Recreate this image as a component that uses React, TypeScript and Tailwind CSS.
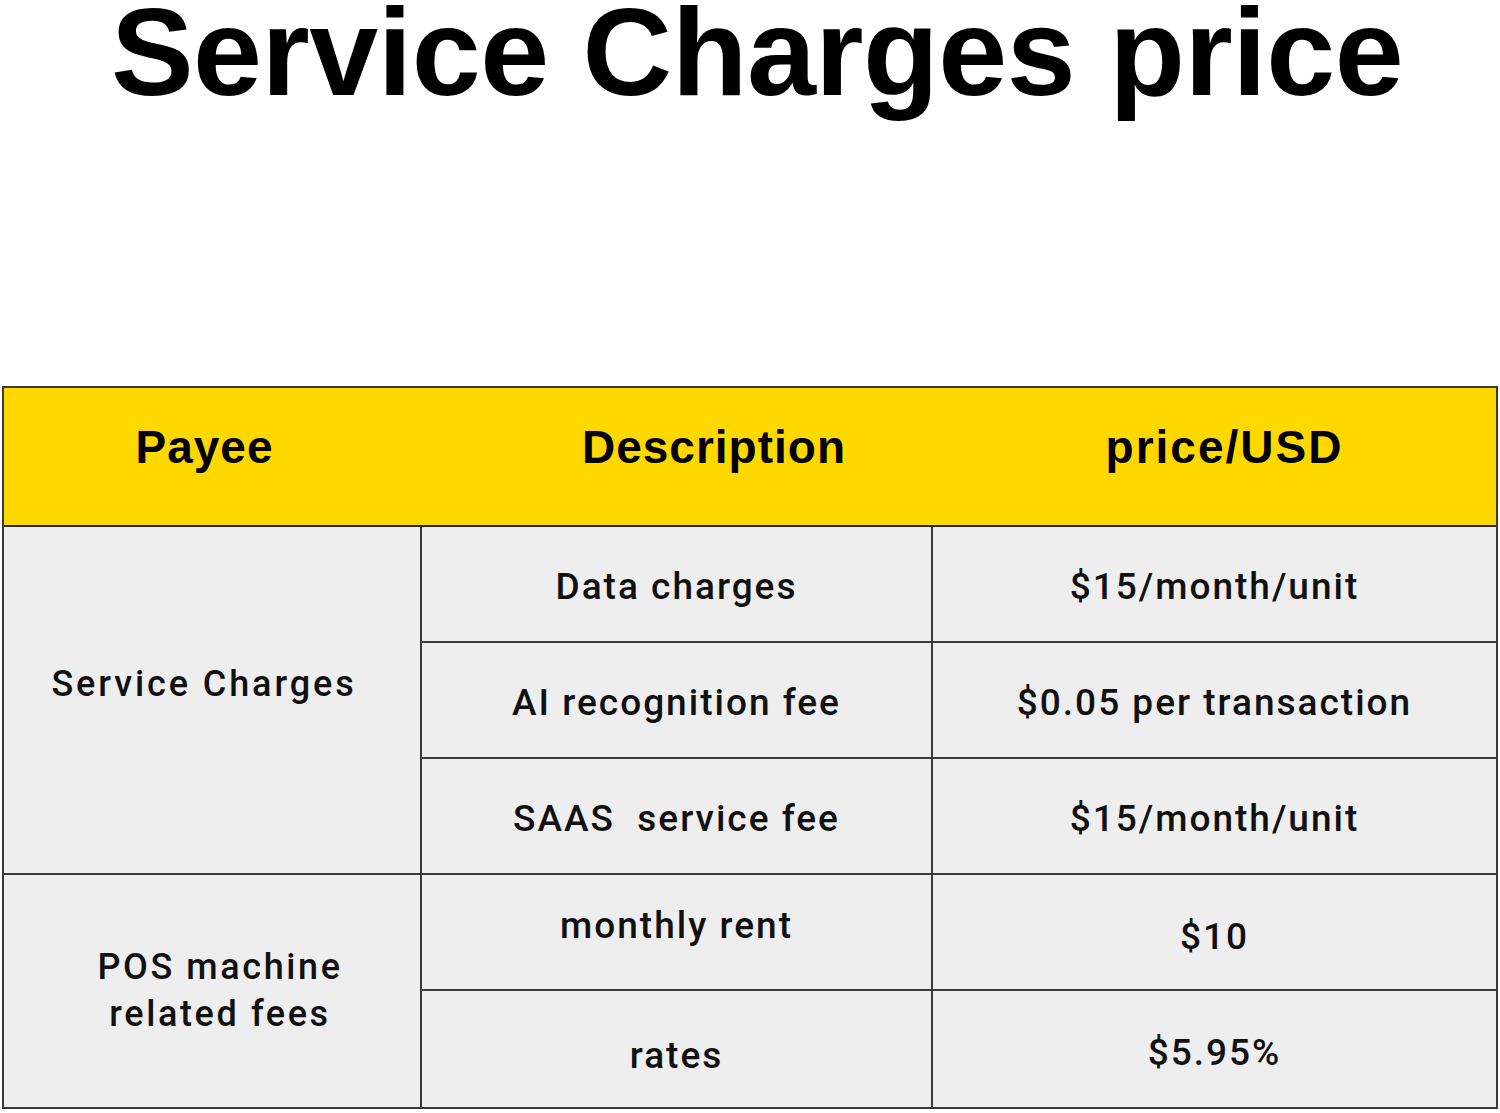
const rows = [
  { desc: "Data charges", price: "$15/month/unit" },
  { desc: "AI recognition fee", price: "$0.05 per transaction" },
  { desc: "SAAS  service fee", price: "$15/month/unit" },
  { desc: "monthly rent", price: "$10" },
  { desc: "rates", price: "$5.95%" },
];

export default function App() {
  return (
    <div className="w-[1500px] h-[1113px] bg-white overflow-hidden font-['Liberation_Sans',Arial,sans-serif] text-black">
      {/* Title */}
      <h1 className="pl-[14px] text-center text-[124px] font-bold leading-[105px] tracking-[-0.5px]">
        Service Charges price
      </h1>

      {/* Table */}
      <div className="mt-[281px] ml-[2px] w-[1496px] border-2 border-[#3a3a3a] bg-[#efeeef]">
        {/* Header */}
        <div className="flex h-[139px] items-center bg-[#ffd800] border-b-2 border-[#2a2a2a] pb-[18px] text-[46px] font-bold tracking-[1px]">
          <div className="w-[419px] text-center pr-[18px]">Payee</div>
          <div className="w-[582px] text-center">Description</div>
          <div className="flex-1 text-center pr-[52px] tracking-[2px]">price/USD</div>
        </div>

        {/* Body */}
        <div className="grid grid-cols-[418px_511px_1fr] grid-rows-[116px_116px_116px_116px_116px] font-['Roboto',Arial,sans-serif] font-medium text-[37px] tracking-[2px] text-[#111]">
          <div className="row-span-3 flex items-center justify-center pb-[32px] pr-[16px] text-[36px] tracking-[2.9px] border-r-2 border-b-2 border-[#3a3a3a]">
            Service Charges
          </div>
          {rows.slice(0, 3).map((r, i) => (
            <Row key={i} desc={r.desc} price={r.price} last={false} descOffset="pt-[6px]" priceOffset="pt-[6px]" />
          ))}
          <div className="row-span-2 flex items-center justify-center text-center text-[36px] tracking-[2.6px] leading-[47px] pl-[16px] border-r-2 border-[#3a3a3a]">
            POS machine
            <br />
            related fees
          </div>
          <Row desc={rows[3].desc} price={rows[3].price} last={false} descOffset="pb-[12px]" priceOffset="pt-[10px]" />
          <Row desc={rows[4].desc} price={rows[4].price} last descOffset="pt-[14px]" priceOffset="pt-[8px]" />
        </div>
      </div>
    </div>
  );
}

function Row({
  desc,
  price,
  last,
  descOffset = "",
  priceOffset = "",
}: {
  desc: string;
  price: string;
  last: boolean;
  descOffset?: string;
  priceOffset?: string;
}) {
  const bottom = last ? "" : "border-b-2";
  return (
    <>
      <div
        className={`flex items-center justify-center whitespace-pre border-r-2 border-[#3a3a3a] ${bottom} ${descOffset}`}
      >
        {desc}
      </div>
      <div className={`flex items-center justify-center border-[#3a3a3a] ${bottom} ${priceOffset}`}>
        {price}
      </div>
    </>
  );
}
